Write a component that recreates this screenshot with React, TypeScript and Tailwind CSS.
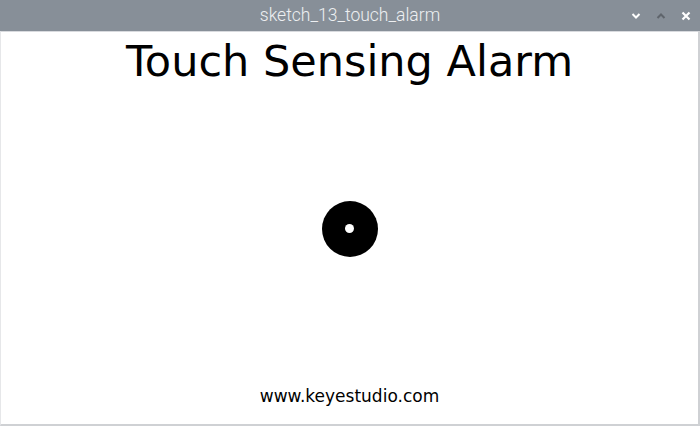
import React from "react";

const App: React.FC = () => {
  return (
    <div className="w-[700px] h-[426px] flex flex-col bg-white overflow-hidden">
      {/* window title bar */}
      <div className="relative h-[31px] bg-[#878f98] flex items-center justify-center shrink-0">
        <span className="text-[17.5px] text-[#eef0f2] font-['Roboto',sans-serif] font-light">
          sketch_13_touch_alarm
        </span>
        <div className="absolute right-[9px] top-0 h-full flex items-center gap-[15px]">
          <svg width="10" height="8" viewBox="0 0 10 8">
            <path d="M1.5 2 L5 5.5 L8.5 2" stroke="#ffffff" strokeWidth="2" fill="none" />
          </svg>
          <svg width="10" height="8" viewBox="0 0 10 8">
            <path d="M1.5 6 L5 2.5 L8.5 6" stroke="#5f656c" strokeWidth="2" fill="none" />
          </svg>
          <svg width="10" height="10" viewBox="0 0 10 10">
            <path d="M1.5 1.5 L8.5 8.5 M8.5 1.5 L1.5 8.5" stroke="#ffffff" strokeWidth="2.2" fill="none" />
          </svg>
        </div>
      </div>

      {/* sketch canvas */}
      <div className="flex-1 flex flex-col items-center border-t border-[#d8dade] border-r-[2px] border-r-[#cfd1d4] border-b-[2px] border-b-[#cfd1d4] border-l border-l-[#e6e7e9]">
        <h1 className="mt-[3px] text-[43px] leading-[52px] text-black font-['DejaVu_Sans',sans-serif]">
          Touch Sensing Alarm
        </h1>
        <div className="flex-1 flex items-center justify-center pb-[16px]">
          <div className="w-[56px] h-[56px] rounded-full bg-black flex items-center justify-center">
            <div className="w-[9px] h-[9px] rounded-full bg-white" />
          </div>
        </div>
        <p className="mb-[18px] text-[17px] leading-[20px] text-black font-['DejaVu_Sans',sans-serif]">
          www.keyestudio.com
        </p>
      </div>
    </div>
  );
};

export default App;
